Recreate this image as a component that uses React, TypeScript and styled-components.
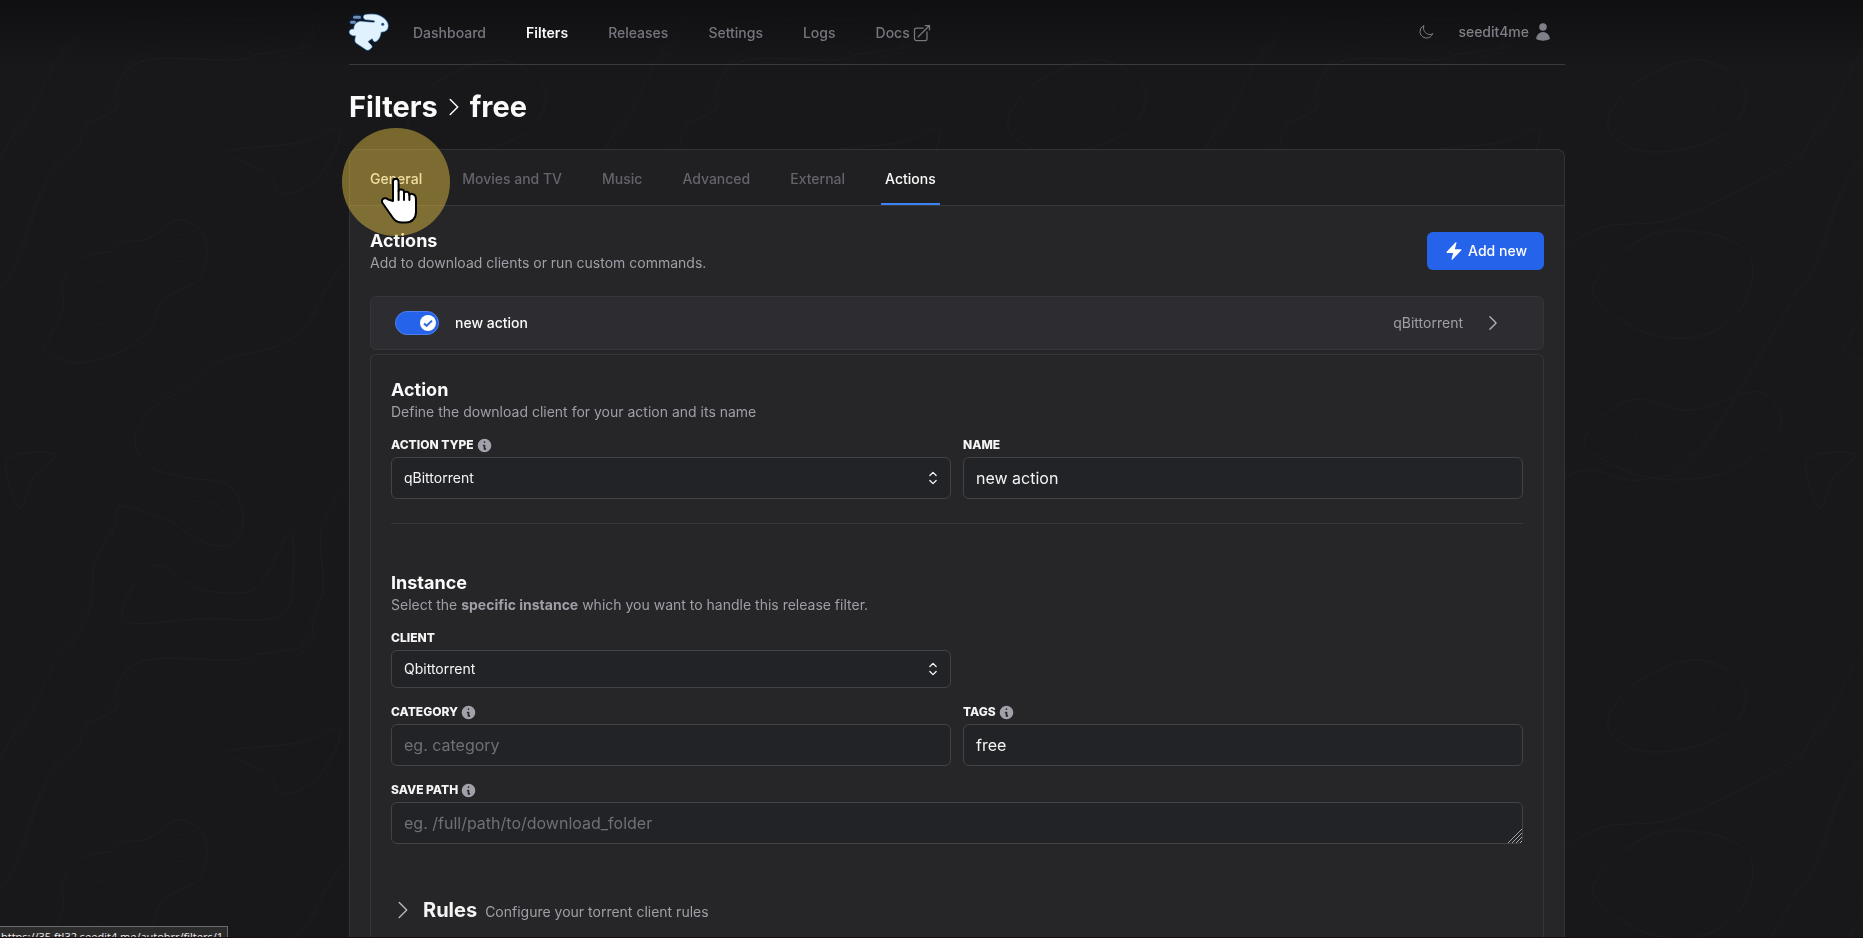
import React from "react";
import styled, { createGlobalStyle, css } from "styled-components";
import { HiInformationCircle } from "react-icons/hi";
import {
  HiBolt,
  HiOutlineArrowTopRightOnSquare,
  HiOutlineChevronRight,
  HiOutlineChevronUpDown,
  HiOutlineMoon,
  HiUser,
} from "react-icons/hi2";

const GlobalStyle = createGlobalStyle`
  *, *::before, *::after { box-sizing: border-box; }
  html { color-scheme: dark; }
  body {
    margin: 0;
    background: #18181b;
    color: #fafafa;
    font-family: Inter, "Liberation Sans", sans-serif;
    font-size: 14px;
    line-height: 20px;
  }
  h1, h2, h3, p { margin: 0; }
  button, input, select, textarea { font: inherit; color: inherit; }
  a { color: inherit; text-decoration: none; }
  svg { display: block; flex: none; }
`;

/* ---------- background ---------- */

const Backdrop = styled.svg`
  position: fixed;
  inset: 0;
  width: 100%;
  height: 100%;
  z-index: -1;
`;

type Point = [number, number];

const smooth = (points: Point[], closed = false) => {
  const n = points.length;
  const at = (i: number): Point =>
    closed ? points[(i + n) % n] : points[Math.max(0, Math.min(n - 1, i))];
  let d = `M${points[0][0]} ${points[0][1]}`;
  const last = closed ? n : n - 1;
  for (let i = 0; i < last; i++) {
    const [p0, p1, p2, p3] = [at(i - 1), at(i), at(i + 1), at(i + 2)];
    const c1 = [p1[0] + (p2[0] - p0[0]) / 6, p1[1] + (p2[1] - p0[1]) / 6];
    const c2 = [p2[0] - (p3[0] - p1[0]) / 6, p2[1] - (p3[1] - p1[1]) / 6];
    d += `C${c1[0]} ${c1[1]} ${c2[0]} ${c2[1]} ${p2[0]} ${p2[1]}`;
  }
  return closed ? d + "Z" : d;
};

const contours: { points: Point[]; closed?: boolean }[] = [
  { points: [[0, 287], [18, 263], [25, 239], [37, 203], [50, 173], [67, 155], [80, 146], [85, 126], [117, 108], [117, 84], [147, 60], [233, 60], [260, 54], [300, 48], [313, 40], [313, 22], [323, -14], [322, -74], [349, -113], [390, -130], [440, -120], [500, -150], [600, -313]] },
  { points: [[0, 157], [15, 133], [33, 111], [42, 90], [62, 50], [80, 34], [92, -2], [95, -41], [113, -68], [117, -92], [133, -92], [173, -77], [200, -59], [233, -56], [243, -86], [227, -116], [187, -122], [150, -134], [135, -160], [150, -190], [183, -211], [217, -238], [283, -256], [313, -283], [323, -307], [349, -340], [400, -372], [470, -380], [540, -410], [600, -443]] },
  { points: [[45, 347], [63, 310], [63, 281], [83, 257], [113, 251], [120, 242], [147, 239], [177, 220], [200, 230], [207, 254], [197, 281], [163, 299], [150, 329], [117, 353], [77, 363], [48, 353]], closed: true },
  { points: [[128, 622], [130, 592], [157, 565], [200, 589], [247, 592], [267, 574], [290, 532], [293, 574], [280, 616], [200, 619]], closed: true },
  { points: [[228, 152], [297, 143], [338, 129], [333, 155], [313, 182], [283, 194], [267, 173]], closed: true },
  { points: [[7, 460], [55, 454], [33, 478], [20, 508]], closed: true },
  { points: [[393, 287], [420, 255], [460, 232], [520, 236], [552, 262], [540, 310], [500, 336], [450, 334], [410, 312]], closed: true },
  { points: [[408, 120], [440, 80], [500, 60], [545, 88], [530, 130], [480, 150], [430, 148]], closed: true },
  { points: [[384, 440], [430, 400], [490, 410], [560, 392], [580, 430], [530, 470], [470, 480], [420, 468]], closed: true },
];

const faintContours = [
  { cx: 178, cy: 248, rx: 13, ry: 9 }, { cx: 178, cy: 248, rx: 19, ry: 14 },
  { cx: 100, cy: 300, rx: 14, ry: 10 }, { cx: 102, cy: 302, rx: 26, ry: 22 },
  { cx: 106, cy: 304, rx: 38, ry: 34 }, { cx: 470, cy: 286, rx: 30, ry: 20 },
  { cx: 470, cy: 286, rx: 52, ry: 34 }, { cx: 480, cy: 106, rx: 34, ry: 20 },
  { cx: 486, cy: 436, rx: 50, ry: 18 }, { cx: 200, cy: 513, rx: 24, ry: 12 },
];

const Topography = () => (
  <Backdrop aria-hidden="true">
    <defs>
      <g id="contours" fill="none" stroke="#1d1d20">
        {contours.map((c, i) => (
          <path key={i} d={smooth(c.points, c.closed)} />
        ))}
        {[-14, -7, 7, 14, 21].map((dy) => (
          <g key={dy} transform={`translate(${-dy / 2} ${dy})`} stroke="#19191c">
            <path d={smooth(contours[0].points)} />
            <path d={smooth(contours[1].points)} />
          </g>
        ))}
        {faintContours.map((e, i) => (
          <ellipse key={i} {...e} stroke="#1a1a1d" />
        ))}
      </g>
      <pattern id="topography" width="600" height="600" patternUnits="userSpaceOnUse">
        <use href="#contours" y="-600" />
        <use href="#contours" />
        <use href="#contours" y="600" />
      </pattern>
      <linearGradient id="shade" x1="0" y1="0" x2="0" y2="1">
        <stop offset="0" stopColor="#101012" />
        <stop offset="1" stopColor="#101012" stopOpacity="0" />
      </linearGradient>
    </defs>
    <rect width="100%" height="100%" fill="url(#topography)" />
    <rect width="100%" height="64" fill="url(#shade)" />
  </Backdrop>
);

/* ---------- page frame ---------- */

const Page = styled.div`
  min-height: 100vh;
  display: flex;
  flex-direction: column;
  padding-left: 51px;
`;

const Container = styled.div`
  width: 100%;
  max-width: 1280px;
  margin: 0 auto;
  padding: 0 32px;
  flex: 1;
  display: flex;
  flex-direction: column;
`;

const NavBar = styled.header`
  display: flex;
  align-items: center;
  justify-content: space-between;
  height: 65px;
  border-bottom: 1px solid #3a3a3d;
`;

const NavLinks = styled.nav`
  display: flex;
  align-items: center;
  gap: 40px;
`;

const NavLink = styled.a<{ $active?: boolean }>`
  display: flex;
  align-items: center;
  gap: 2px;
  padding-top: 2px;
  font-weight: ${(p) => (p.$active ? 600 : 500)};
  color: ${(p) => (p.$active ? "#fafafa" : "#76767e")};
`;

const Brand = styled.a`
  display: block;
  margin-right: -16px;
`;

const NavTools = styled.div`
  display: flex;
  align-items: center;
  gap: 24px;
  padding-right: 12px;
  color: #7f7f87;
`;

const PlainButton = styled.button`
  display: flex;
  align-items: center;
  gap: 4px;
  padding: 0;
  border: 0;
  background: none;
  font-weight: 500;
  cursor: pointer;
`;

const PageTitle = styled.h1`
  display: flex;
  align-items: center;
  gap: 4px;
  padding: 24px 0;
  font-size: 29px;
  line-height: 36px;
  font-weight: 700;
`;

/* ---------- card and tabs ---------- */

const Card = styled.main`
  flex: 1;
  display: flex;
  flex-direction: column;
  border: 1px solid #333336;
  border-bottom: 0;
  border-radius: 8px 8px 0 0;
  background: #262628;
`;

const Tabs = styled.nav`
  display: flex;
  gap: 32px;
  height: 56px;
  padding: 0 16px;
  border-bottom: 1px solid #38383b;
  border-radius: 8px 8px 0 0;
  background: #202022;
`;

const Tab = styled.a<{ $state?: "active" | "hover" }>`
  display: flex;
  align-items: center;
  padding: 4px 4px 0;
  font-weight: 500;
  color: ${(p) => (p.$state ? "#fafafa" : "#64646c")};
  border-bottom: 2px solid ${(p) => (p.$state === "active" ? "#3b82f6" : "transparent")};
`;

const TabBody = styled.section`
  flex: 1;
  display: flex;
  flex-direction: column;
  padding: 23px 20px 0;
`;

const SectionHead = styled.div`
  display: flex;
  align-items: center;
  justify-content: space-between;
`;

const Heading = styled.h2`
  font-size: 18px;
  line-height: 24px;
  font-weight: 700;
  color: #fafafa;
`;

const Hint = styled.p`
  color: #9f9fa8;
`;

const AddButton = styled.button`
  display: flex;
  align-items: center;
  gap: 4px;
  height: 38px;
  padding: 0 17px;
  border: 0;
  border-radius: 6px;
  background: #2563eb;
  color: #fff;
  font-weight: 500;
  cursor: pointer;
`;

/* ---------- action list ---------- */

const ActionRow = styled.div`
  display: flex;
  align-items: center;
  height: 54px;
  margin: 23px 0 4px;
  padding: 0 40px 0 24px;
  border: 1px solid #36363a;
  border-radius: 6px;
  background: #2d2d31;
`;

const Toggle = styled.label`
  position: relative;
  display: flex;
  align-items: center;
  justify-content: flex-end;
  width: 44px;
  height: 24px;
  margin-right: 16px;
  padding: 0 2px;
  border: 1px solid #4f7fe8;
  border-radius: 12px;
  background: #2563eb;

  input {
    position: absolute;
    inset: 0;
    margin: 0;
    opacity: 0;
  }
`;

const ActionName = styled.span`
  flex: 1;
  font-weight: 500;
`;

const ActionClient = styled.span`
  margin-right: 20px;
  color: #9f9fa8;
`;

const Chevron = styled(HiOutlineChevronRight)<{ $muted?: boolean }>`
  color: ${(p) => (p.$muted ? "#b4b4bb" : "#fafafa")};
`;

/* ---------- form ---------- */

const Panel = styled.form`
  flex: 1;
  padding: 23px 20px 10px;
  border: 1px solid #36363a;
  border-bottom: 0;
  border-radius: 6px 6px 0 0;
`;

const Fields = styled.div`
  display: grid;
  grid-template-columns: 1fr 1fr;
  gap: 16px 12px;
  padding-top: 15px;
`;

const FieldBox = styled.div<{ $wide?: boolean }>`
  display: flex;
  flex-direction: column;
  gap: 4px;
  ${(p) => p.$wide && css`grid-column: 1 / -1;`}
`;

const FieldLabel = styled.label`
  display: flex;
  align-items: center;
  gap: 2px;
  font-size: 12px;
  line-height: 16px;
  height: 16px;
  font-weight: 800;
  text-transform: uppercase;
  color: #f4f4f5;
`;

const InfoIcon = styled(HiInformationCircle)`
  color: #a1a1aa;
`;

const controlLook = css`
  width: 100%;
  margin: 0;
  border: 1px solid #434347;
  border-radius: 6px;
  background: #222326;
  color: #f4f4f5;
  outline: 0;
`;

const TextInput = styled.input`
  ${controlLook}
  height: 42px;
  padding: 0 12px;
  font-size: 16px;
  line-height: 24px;
  &::placeholder { color: #6f6f76; opacity: 1; }
`;

const TextArea = styled.textarea`
  ${controlLook}
  display: block;
  height: 42px;
  padding: 8px 12px;
  font-size: 16px;
  line-height: 24px;
  resize: none;
  overflow: hidden;
  &::placeholder { color: #6f6f76; opacity: 1; }
`;

const ControlWrap = styled.div`
  position: relative;
`;

const Select = styled.select<{ $compact?: boolean }>`
  ${controlLook}
  display: block;
  appearance: none;
  height: ${(p) => (p.$compact ? 38 : 42)}px;
  padding: 0 40px 0 12px;
`;

const SelectArrows = styled(HiOutlineChevronUpDown)`
  position: absolute;
  right: 8px;
  top: 50%;
  margin-top: -10px;
  pointer-events: none;
`;

const Grip = styled.svg`
  position: absolute;
  right: 1px;
  bottom: 1px;
  pointer-events: none;
`;

const Divider = styled.hr`
  height: 1px;
  margin: 24px 0 47px;
  border: 0;
  background: #363639;
`;

const RulesToggle = styled.button`
  display: flex;
  align-items: center;
  gap: 8px;
  width: 100%;
  height: 28px;
  margin-top: 52px;
  padding: 0;
  border: 0;
  background: none;
  text-align: left;
  cursor: pointer;
`;

const RulesText = styled.span`
  display: flex;
  align-items: baseline;
  gap: 8px;
  color: #9f9fa8;

  strong {
    font-size: 20px;
    line-height: 28px;
    font-weight: 700;
    color: #f4f4f5;
  }
`;

/* ---------- overlays ---------- */

const Spotlight = styled.div`
  position: absolute;
  left: 50%;
  top: 50%;
  width: 108px;
  height: 108px;
  margin: -50px 0 0 -54px;
  border-radius: 50%;
  background: rgba(227, 192, 67, 0.48);
  pointer-events: none;

  svg {
    position: absolute;
    left: 38px;
    top: 48px;
  }
`;

const HoverTab = styled.div`
  position: relative;
  display: flex;
`;

const LinkStatus = styled.div`
  position: fixed;
  left: 0;
  bottom: -8px;
  height: 20px;
  padding: 1px 4px 0 1px;
  border: 1px solid #6b6b6b;
  border-left: 0;
  background: #2b2b2b;
  color: #f0f0f0;
  font-family: "Open Sans", "Noto Sans", sans-serif;
  font-size: 11px;
  line-height: 18px;
  white-space: nowrap;
`;

const BottomEdge = styled.div`
  position: fixed;
  left: 0;
  right: 0;
  bottom: 0;
  height: 1px;
  background: #1c0c12;
`;

/* ---------- drawings ---------- */

const rabbitBody =
  "M15.500 3C21 1.800 28 2 32 4.500C36 6.500 38.500 9.500 39 13C39.300 16.500 37.500 19 35 19.500L32 20C31.500 22.500 31 25 29.500 27C28.300 29 26.500 30 25 29.300C23.700 28.600 24 27 23.500 26.500C22 27 20 28.200 18.800 29.800L22.500 33.500C23.500 35 22.500 36 21 37C20 38.200 18.500 38.500 17 37.500L7.500 31.200C6 30 5.800 28 6.300 26.500L7 23.500C4 24 .5 22.800 .5 20C.5 17.800 2.800 16.800 5 17.500C4.800 13.500 7 10.200 11 9.500L24 10.600C26.200 10.800 26.500 8.700 24.500 8.300L16.500 7.500C14.500 7.200 14 4 15.500 3Z";

const RabbitLogo = () => (
  <svg width="40" height="40" viewBox="0 0 40 40" overflow="visible" role="img" aria-label="autobrr">
    <path d={rabbitBody} fill="#0a1c33" stroke="#0a1c33" strokeWidth="3" strokeLinejoin="round" />
    <path d="M5 5.300h6M2 10.300h4" stroke="#0a1c33" strokeWidth="6" strokeLinecap="round" />
    <path d={rabbitBody} fill="#e0f2fe" stroke="#a5d4f2" strokeWidth=".6" />
    <circle cx="33.700" cy="12.300" r="1.500" fill="#2a5078" />
    <path d="M5.500 5.300h5M2.500 10.300h3" stroke="#6d8fb8" strokeWidth="3" strokeLinecap="round" />
  </svg>
);

const HandPointer = () => (
  <svg width="40" height="48" viewBox="0 0 40 48" aria-hidden="true">
    <path
      d="M13 25V5.500a2.800 2.800 0 0 1 5.600 0V15c.2-2 5-2 5.400.6V17c.6-1.800 4.800-1.600 5.200.8V19c.8-1.800 5.400-1.600 6.400 1.500.4 1.500.4 3 .4 5.500v10c0 6-4 10.500-10 10.500h-4c-4.500 0-7-1.500-9-4.500L2.800 27.500c-1.800-2.600-.6-4.800 1.600-5.200 1.400-.2 2.600.2 3.800 1.200z"
      fill="#fff"
      stroke="#000"
      strokeWidth="2"
      strokeLinejoin="round"
    />
    <path d="M18.600 15v9M24 17v7M29.400 19v5" stroke="#000" strokeWidth="2" strokeLinecap="round" />
  </svg>
);

const KnobCheck = () => (
  <svg width="16" height="16" viewBox="0 0 16 16" aria-hidden="true">
    <circle cx="8" cy="8" r="8" fill="#fff" />
    <path d="M4 8.400l2.600 2.400L12 5.600" fill="none" stroke="#2f6bdc" strokeWidth="2" />
  </svg>
);

/* ---------- composition ---------- */

interface FieldProps {
  id: string;
  label: string;
  info?: boolean;
  wide?: boolean;
  children: React.ReactNode;
}

const Field = ({ id, label, info, wide, children }: FieldProps) => (
  <FieldBox $wide={wide}>
    <FieldLabel htmlFor={id}>
      {label}
      {info && <InfoIcon size={17} />}
    </FieldLabel>
    {children}
  </FieldBox>
);

export default function App() {
  return (
    <>
      <GlobalStyle />
      <Topography />
      <Page>
        <Container>
          <NavBar>
            <NavLinks>
              <Brand href="#home"><RabbitLogo /></Brand>
              <NavLink href="#dashboard">Dashboard</NavLink>
              <NavLink href="#filters" $active>Filters</NavLink>
              <NavLink href="#releases">Releases</NavLink>
              <NavLink href="#settings">Settings</NavLink>
              <NavLink href="#logs">Logs</NavLink>
              <NavLink href="#docs">
                Docs <HiOutlineArrowTopRightOnSquare size={20} />
              </NavLink>
            </NavLinks>
            <NavTools>
              <PlainButton type="button" aria-label="Toggle theme">
                <HiOutlineMoon size={16} />
              </PlainButton>
              <PlainButton type="button">
                seedit4me <HiUser size={20} />
              </PlainButton>
            </NavTools>
          </NavBar>

          <PageTitle>
            <a href="#filters">Filters</a>
            <Chevron size={24} />
            free
          </PageTitle>

          <Card>
            <Tabs>
              <HoverTab>
                <Tab href="#general" $state="hover">General</Tab>
                <Spotlight><HandPointer /></Spotlight>
              </HoverTab>
              <Tab href="#movies-tv">Movies and TV</Tab>
              <Tab href="#music">Music</Tab>
              <Tab href="#advanced">Advanced</Tab>
              <Tab href="#external">External</Tab>
              <Tab href="#actions" $state="active">Actions</Tab>
            </Tabs>

            <TabBody>
              <SectionHead>
                <div>
                  <Heading>Actions</Heading>
                  <Hint>Add to download clients or run custom commands.</Hint>
                </div>
                <AddButton type="button">
                  <HiBolt size={20} /> Add new
                </AddButton>
              </SectionHead>

              <ActionRow>
                <Toggle>
                  <input type="checkbox" defaultChecked aria-label="Enable new action" />
                  <KnobCheck />
                </Toggle>
                <ActionName>new action</ActionName>
                <ActionClient>qBittorrent</ActionClient>
                <Chevron size={20} $muted />
              </ActionRow>

              <Panel>
                <Heading>Action</Heading>
                <Hint>Define the download client for your action and its name</Hint>
                <Fields>
                  <Field id="type" label="Action type" info>
                    <ControlWrap>
                      <Select id="type"><option>qBittorrent</option></Select>
                      <SelectArrows size={20} />
                    </ControlWrap>
                  </Field>
                  <Field id="name" label="Name">
                    <TextInput id="name" defaultValue="new action" />
                  </Field>
                </Fields>

                <Divider />

                <Heading>Instance</Heading>
                <Hint>
                  Select the <b>specific instance</b> which you want to handle this release filter.
                </Hint>
                <Fields>
                  <Field id="client" label="Client">
                    <ControlWrap>
                      <Select id="client" $compact><option>Qbittorrent</option></Select>
                      <SelectArrows size={20} />
                    </ControlWrap>
                  </Field>
                  <span />
                  <Field id="category" label="Category" info>
                    <TextInput id="category" placeholder="eg. category" />
                  </Field>
                  <Field id="tags" label="Tags" info>
                    <TextInput id="tags" defaultValue="free" />
                  </Field>
                  <Field id="path" label="Save path" info wide>
                    <ControlWrap>
                      <TextArea id="path" rows={1} placeholder="eg. /full/path/to/download_folder" />
                      <Grip width="14" height="14" viewBox="0 0 14 14" aria-hidden="true">
                        <path d="M0 14L14 0M4 14L14 4M8 14l6-6M12 14l2-2" stroke="#a8a8a8" />
                      </Grip>
                    </ControlWrap>
                  </Field>
                </Fields>

                <RulesToggle type="button">
                  <Chevron size={24} $muted />
                  <RulesText>
                    <strong>Rules</strong> Configure your torrent client rules
                  </RulesText>
                </RulesToggle>
              </Panel>
            </TabBody>
          </Card>
        </Container>
      </Page>
      <LinkStatus>https://35.ftl32.seedit4.me/autobrr/filters/1</LinkStatus>
      <BottomEdge />
    </>
  );
}
